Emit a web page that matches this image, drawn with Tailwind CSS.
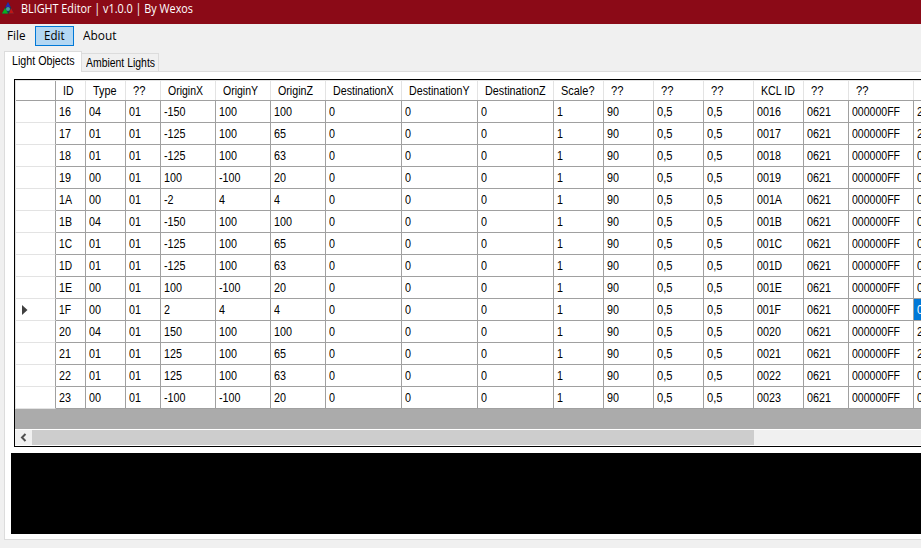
<!DOCTYPE html>
<html lang="en"><head><meta charset="utf-8"><title>BLIGHT Editor</title>
<script src="https://cdn.jsdelivr.net/npm/@tailwindcss/browser@4"></script></head>
<body class="w-[921px] h-[548px] overflow-hidden bg-[#f0f0f0] text-black flex flex-col font-['Liberation_Sans',sans-serif]">
<header class="h-6 shrink-0 bg-[#8b0a17] flex items-start text-white font-['Open_Sans',sans-serif]">
<svg class="mt-[2px] ml-[2px] w-3 h-3 shrink-0" viewBox="0 0 12 12"><path d="M6 0L12 11.5H0Z" fill="#183c50"/><path d="M6 0L8.5 5H3.5Z" fill="#2828b0"/><path d="M0 11.5L3 6L5 9.5L6 11.5Z" fill="#08b020"/><path d="M12 11.5L9 6L8 9L7 11.5Z" fill="#c01515"/><circle cx="6" cy="7" r="2" fill="#4a9a9a"/></svg>
<span class="t inline-block ml-[7px] text-[12px] leading-[18px] whitespace-nowrap origin-left" data-w="172">BLIGHT Editor | v1.0.0 | By Wexos</span>
</header>
<nav class="h-[27px] shrink-0 flex items-start pt-[2px] font-['Open_Sans',sans-serif] text-[12px] leading-[20px] whitespace-nowrap">
<div class="w-[35px] pl-[7px]"><span class="t inline-block origin-left" data-w="18.5">File</span></div>
<div class="w-[39px] h-5 border border-[#0078d7] bg-[#b3d7f3] pl-2 leading-[18px]"><span class="t inline-block origin-left" data-w="20.5">Edit</span></div>
<div class="pl-[9px]"><span class="t inline-block origin-left" data-w="33.5">About</span></div>
</nav>
<div class="flex h-[21px] shrink-0 pl-1 items-end text-[12px] whitespace-nowrap">
<div class="w-[78px] h-[21px] bg-white border-l border-t border-r border-[#dcdcdc] pl-[7px] leading-[19px]"><span class="t inline-block origin-left" data-w="62.5">Light Objects</span></div>
<div class="w-[77px] h-[19px] bg-[#f0f0f0] border-t border-r border-b border-[#dcdcdc] pl-1 leading-[19px]"><span class="t inline-block origin-left" data-w="69">Ambient Lights</span></div>
<div class="flex-1 h-px bg-[#dcdcdc]"></div>
</div>
<main class="ml-1 h-[468px] shrink-0 bg-white border-l border-b border-[#dcdcdc] pt-[7px]">
<section class="ml-[9px] h-[368px] border-l border-t border-b border-black overflow-hidden bg-[#ababab] flex flex-col">
<div id="grid" class="w-[970px] shrink-0 bg-white border-l border-t border-[#e3e3e3] text-[12px] whitespace-nowrap"></div>
<div class="flex-1"></div>
<div class="h-[17px] shrink-0 bg-[#f0f0f0] border-t border-b border-white flex"><svg class="w-[17px] h-[15px] shrink-0" viewBox="0 0 17 15"><path d="M10.5 4L7 7.5L10.5 11" fill="none" stroke="#505050" stroke-width="2"/></svg><div class="w-[722px] bg-[#cdcdcd]"></div></div>
</section>
<section class="ml-[6px] mt-[6px] h-[81px] bg-black"></section>
</main>
<script>
const cols=[[30,'ID',10.5],[40,'Type',23.5],[35,'??',12.5],[55,'OriginX',35],[55,'OriginY',35],[55,'OriginZ',35],[76,'DestinationX',60.5],[76,'DestinationY',60.5],[76,'DestinationZ',60.5],[50,'Scale?',33.5],[50,'??',12.5],[50,'??',12.5],[50,'??',12.5],[50,'KCL ID',34],[45,'??',12.5],[65,'??',12.5],[55,'',0]];
const data=[['16','04','-150','100','100'],['17','01','-125','100','65'],['18','01','-125','100','63'],['19','00','100','-100','20'],['1A','00','-2','4','4'],['1B','04','-150','100','100'],['1C','01','-125','100','65'],['1D','01','-125','100','63'],['1E','00','100','-100','20'],['1F','00','2','4','4'],['20','04','150','100','100'],['21','01','125','100','65'],['22','01','125','100','63'],['23','00','-100','-100','20']];
const last=['2','2','0','0','0','0','0','0','0','0','2','2','0','0'];
let h='<div class="flex h-5 border-b border-[#a0a0a0]"><div class="w-10 shrink-0 border-r border-[#a0a0a0]"></div>'+cols.map(c=>`<div class="shrink-0 pl-[7px] leading-[20px] h-[19px] border-r border-[#e3e3e3]" style="width:${c[0]}px"><span class="t inline-block origin-left" data-w="${c[2]}">${c[1]}</span></div>`).join('')+'</div>';
data.forEach((r,i)=>{const v=[r[0],r[1],'01',r[2],r[3],r[4],'0','0','0','1','90','0,5','0,5','00'+r[0],'0621','000000FF',last[i]];
h+='<div class="flex h-[22px]"><div class="w-10 shrink-0 border-r border-r-[#a0a0a0] border-b border-b-[#e3e3e3] flex items-center pl-[6px]">'+(r[0]=='1F'?'<svg class="w-[6px] h-[10px]" viewBox="0 0 6 10"><path d="M0 0L5.5 5L0 10Z" fill="#404040"/></svg>':'')+'</div>'+v.map((s,j)=>`<div class="shrink-0 pl-[3px] leading-[22px] h-[22px] border-r border-b border-[#a0a0a0] ${j==16&&r[0]=='1F'?'bg-[#0078d7] text-white':''}" style="width:${cols[j][0]}px"><span class="t inline-block origin-left" data-w="${[...s].reduce((a,c)=>a+(c=='-'||c==','?3.5:/[A-E]/.test(c)?7:6),0)}">${s}</span></div>`).join('')+'</div>';});
document.getElementById('grid').innerHTML=h;
function fit(){document.querySelectorAll('.t').forEach(e=>{e.style.transform='none';const w=e.getBoundingClientRect().width;if(w)e.style.transform='scaleX('+(+e.dataset.w/w)+')';});}
fit();addEventListener('load',()=>{fit();document.fonts.ready.then(fit);requestAnimationFrame(fit);});
</script></body></html>
